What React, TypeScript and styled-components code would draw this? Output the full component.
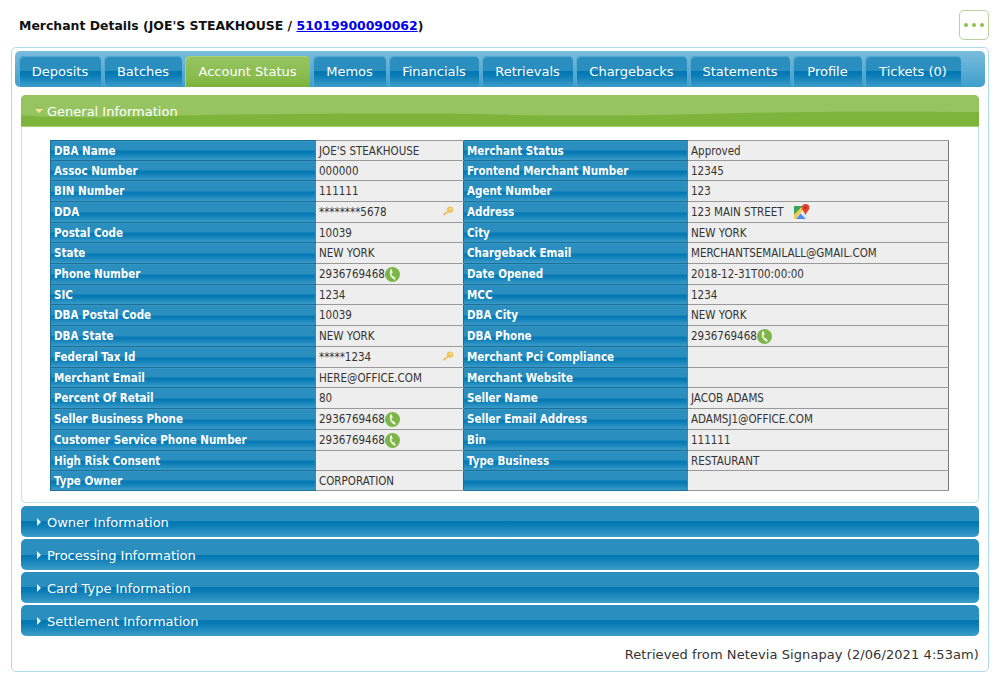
import type { ReactNode } from 'react';
import styled, { createGlobalStyle } from 'styled-components';

const BLUE_GLOSS = 'linear-gradient(to bottom, #2a8ebf 0%, #2a8ebf 50%, #0277b3 50%, #0a7cb6 62%, #3c9dc9 100%)';

const GlobalStyle = createGlobalStyle`
  html, body {
    margin: 0;
    background: #fff;
  }
  body {
    font-family: "DejaVu Sans", Verdana, sans-serif;
    color: #333;
  }
`;

interface TField {
  label?: string;
  value?: string;
  icon?: 'key' | 'phone' | 'map';
}

const COLUMN_WIDTHS = [265, 148, 224, 261];
const ROW_HEIGHTS = [20, 20, 21, 21, 20, 21, 21, 20, 21, 21, 21, 20, 21, 21, 21, 20, 20];

const ROWS: [TField, TField][] = [
  [{ label: 'DBA Name', value: "JOE'S STEAKHOUSE" }, { label: 'Merchant Status', value: 'Approved' }],
  [{ label: 'Assoc Number', value: '000000' }, { label: 'Frontend Merchant Number', value: '12345' }],
  [{ label: 'BIN Number', value: '111111' }, { label: 'Agent Number', value: '123' }],
  [{ label: 'DDA', value: '********5678', icon: 'key' }, { label: 'Address', value: '123 MAIN STREET', icon: 'map' }],
  [{ label: 'Postal Code', value: '10039' }, { label: 'City', value: 'NEW YORK' }],
  [{ label: 'State', value: 'NEW YORK' }, { label: 'Chargeback Email', value: 'MERCHANTSEMAILALL@GMAIL.COM' }],
  [{ label: 'Phone Number', value: '2936769468', icon: 'phone' }, { label: 'Date Opened', value: '2018-12-31T00:00:00' }],
  [{ label: 'SIC', value: '1234' }, { label: 'MCC', value: '1234' }],
  [{ label: 'DBA Postal Code', value: '10039' }, { label: 'DBA City', value: 'NEW YORK' }],
  [{ label: 'DBA State', value: 'NEW YORK' }, { label: 'DBA Phone', value: '2936769468', icon: 'phone' }],
  [{ label: 'Federal Tax Id', value: '*****1234', icon: 'key' }, { label: 'Merchant Pci Compliance' }],
  [{ label: 'Merchant Email', value: 'HERE@OFFICE.COM' }, { label: 'Merchant Website' }],
  [{ label: 'Percent Of Retail', value: '80' }, { label: 'Seller Name', value: 'JACOB ADAMS' }],
  [{ label: 'Seller Business Phone', value: '2936769468', icon: 'phone' }, { label: 'Seller Email Address', value: 'ADAMSJ1@OFFICE.COM' }],
  [{ label: 'Customer Service Phone Number', value: '2936769468', icon: 'phone' }, { label: 'Bin', value: '111111' }],
  [{ label: 'High Risk Consent' }, { label: 'Type Business', value: 'RESTAURANT' }],
  [{ label: 'Type Owner', value: 'CORPORATION' }, {}],
];

const TABS = [
  { name: 'Deposits', width: 82 },
  { name: 'Batches', width: 78 },
  { name: 'Account Status', width: 125, active: true },
  { name: 'Memos', width: 73 },
  { name: 'Financials', width: 90 },
  { name: 'Retrievals', width: 91 },
  { name: 'Chargebacks', width: 111 },
  { name: 'Statements', width: 100 },
  { name: 'Profile', width: 69 },
  { name: 'Tickets (0)', width: 96 },
];

const SECTIONS = ['Owner Information', 'Processing Information', 'Card Type Information', 'Settlement Information'];

const KeyIcon = () => (
  <svg width="12" height="11" viewBox="0 0 12 11">
    <path d="M6.6 4.6 1.6 7.6c-.7.5-.5 1.8.5 1.9l1-.5.4-.9 1-.2.3-.8 2.600-1.200z" fill="#f0bc4e" />
    <circle cx="8.1" cy="3.6" r="3.2" fill="#f3c25a" />
    <circle cx="8.6" cy="2.9" r="1.1" fill="#fbe7a6" />
  </svg>
);

const PhoneIcon = () => (
  <svg width="15" height="15" viewBox="0 0 15 15">
    <circle cx="7.5" cy="7.5" r="7.5" fill="#7cb646" />
    <path d="M6.3 3.2C4.6 6 6 10.2 9.8 11.8" fill="none" stroke="#f6f9ee" strokeWidth="1.6" strokeLinecap="round" />
    <path d="M6 3.2 7 5.4M9.4 11.6 8.6 9.8" fill="none" stroke="#f6f9ee" strokeWidth="1.4" strokeLinecap="round" />
  </svg>
);

const MapIcon = () => (
  <svg width="17" height="16" viewBox="0 0 17 16">
    <path d="M1 2h9L1 11z" fill="#3aa655" />
    <path d="M1 11 10 2h1l.5 2L2.4 15H1z" fill="#f7c948" />
    <path d="M3 15 7.5 9.6 13 15z" fill="#4a8cf0" />
    <path d="M8.2 8.8 11.5 4l1.5 9z" fill="#e8e6da" />
    <path d="M12.6 0a3.8 3.8 0 0 1 3.8 3.8c0 2.6-2.8 4-3.8 7.4-1-3.4-3.8-4.8-3.8-7.4A3.8 3.8 0 0 1 12.6 0z" fill="#e4432f" />
    <circle cx="12.6" cy="3.8" r="1.2" fill="#a92a1c" />
  </svg>
);

const GreenWave = () => (
  <S.Wave viewBox="0 0 958 31" preserveAspectRatio="none" aria-hidden="true">
    <path d="M0 0H958V17C860 16.500 780 16.500 700 18.500S560 21.500 480 19.500 200 18.500 80 22.500C50 22.500 20 21.500 0 20.500z" fill="#96c461" />
  </S.Wave>
);

const FieldIcon = ({ icon }: { icon: NonNullable<TField['icon']> }): ReactNode => {
  if (icon === 'key') return <S.KeySlot><KeyIcon /></S.KeySlot>;
  if (icon === 'map') return <S.MapSlot><MapIcon /></S.MapSlot>;
  return <S.PhoneSlot><PhoneIcon /></S.PhoneSlot>;
};

const FieldCells = ({ field }: { field: TField }) => (
  <>
    <S.LabelCell>{field.label}</S.LabelCell>
    <S.ValueCell>
      <S.ValueInner>
        {field.value}
        {field.icon && <FieldIcon icon={field.icon} />}
      </S.ValueInner>
    </S.ValueCell>
  </>
);

const App = () => (
  <>
    <GlobalStyle />
    <S.Page>
      <S.TitleRow>
        <S.Title>
          Merchant Details (JOE'S STEAKHOUSE / <S.TitleLink href="#">51019900090062</S.TitleLink>)
        </S.Title>
        <S.MoreButton aria-label="More">
          <span />
          <span />
          <span />
        </S.MoreButton>
      </S.TitleRow>

      <S.Panel>
        <S.TabBar>
          {TABS.map((tab) => (
            <S.Tab key={tab.name} $active={tab.active} $width={tab.width}>
              {tab.name}
            </S.Tab>
          ))}
        </S.TabBar>

        <S.Content>
          <S.GreenHeader>
            <GreenWave />
            <S.OpenCaret />
            <S.HeaderText>General Information</S.HeaderText>
          </S.GreenHeader>
          <S.SectionBody>
            <S.Table>
              <colgroup>
                {COLUMN_WIDTHS.map((width) => (
                  <S.Column key={width} $width={width} />
                ))}
              </colgroup>
              <tbody>
                {ROWS.map(([left, right], index) => (
                  <S.Row key={index} $height={ROW_HEIGHTS[index]}>
                    <FieldCells field={left} />
                    <FieldCells field={right} />
                  </S.Row>
                ))}
              </tbody>
            </S.Table>
          </S.SectionBody>

          <S.SectionList>
            {SECTIONS.map((section) => (
              <S.BlueHeader key={section}>
                <S.ClosedCaret />
                <S.HeaderText>{section}</S.HeaderText>
              </S.BlueHeader>
            ))}
          </S.SectionList>

          <S.Footer>Retrieved from Netevia Signapay (2/06/2021 4:53am)</S.Footer>
        </S.Content>
      </S.Panel>
    </S.Page>
  </>
);

export default App;

const S = {
  Page: styled.div`
    width: 1000px;
    height: 681px;
    box-sizing: border-box;
    padding: 9px 11px 0;
    overflow: hidden;
  `,

  TitleRow: styled.div`
    display: flex;
    align-items: center;
    justify-content: space-between;
    height: 31px;
    padding: 0 0 0 8px;
    margin-bottom: 7px;
  `,

  Title: styled.h1`
    margin: 2px 0 0;
    font-size: 12.44px;
    font-weight: bold;
    color: #111;
  `,

  TitleLink: styled.a`
    color: #0000ee;
    text-decoration: underline;
  `,

  MoreButton: styled.button`
    display: flex;
    align-items: center;
    justify-content: center;
    gap: 4px;
    width: 30px;
    height: 30px;
    padding: 0;
    background: #fff;
    border: 1px solid #b9d49a;
    border-radius: 5px;

    span {
      width: 4px;
      height: 4px;
      border-radius: 50%;
      background: #8cc152;
    }
  `,

  Panel: styled.div`
    box-sizing: border-box;
    width: 978px;
    height: 625px;
    padding: 3px;
    background: #fff;
    border: 1px solid #b0dcf0;
    border-radius: 5px;
  `,

  TabBar: styled.div`
    display: flex;
    align-items: flex-end;
    gap: 3px;
    height: 36px;
    padding: 0 4px;
    box-sizing: border-box;
    background: linear-gradient(to bottom, #7abcdc 0%, #3f9fcb 100%);
    border-radius: 5px;
  `,

  Tab: styled.div<{ $active?: boolean; $width: number }>`
    box-sizing: border-box;
    width: ${({ $width }) => $width}px;
    height: 31px;
    padding-top: 1px;
    line-height: 30px;
    text-align: center;
    font-size: 13px;
    color: #fff;
    border-radius: 5px 5px 0 0;
    background: ${({ $active }) =>
      $active ? 'linear-gradient(to bottom, #96c461 0%, #8abd50 60%, #7cb43c 100%)' : BLUE_GLOSS};
    box-shadow: inset 1px 1px 0 ${({ $active }) => ($active ? '#a9d27c' : '#57a9d1')};
  `,

  Content: styled.div`
    padding: 8px 6px 0;
  `,

  GreenHeader: styled.div`
    position: relative;
    display: flex;
    align-items: center;
    box-sizing: border-box;
    height: 32px;
    padding: 1px 0 0 14px;
    font-size: 13px;
    color: #fff;
    overflow: hidden;
    border-radius: 5px 5px 0 0;
    border-bottom: 1px solid #a6d16f;
    background: #7db53c;
  `,

  Wave: styled.svg`
    position: absolute;
    left: 0;
    top: 0;
    width: 100%;
    height: 31px;
  `,

  HeaderText: styled.span`
    position: relative;
  `,

  OpenCaret: styled.span`
    position: relative;
    width: 0;
    height: 0;
    margin-right: 4px;
    border-left: 4px solid transparent;
    border-right: 4px solid transparent;
    border-top: 4px solid #f6e49a;
  `,

  ClosedCaret: styled.span`
    width: 0;
    height: 0;
    margin: 0 6px 0 2px;
    border-top: 4px solid transparent;
    border-bottom: 4px solid transparent;
    border-left: 4px solid #e8f3f9;
  `,

  SectionBody: styled.div`
    box-sizing: border-box;
    height: 376px;
    padding: 13px 29px 0 28px;
    background: #fff;
    border: 1px solid #c3e2f1;
    border-top: 0;
    border-radius: 0 0 5px 5px;
  `,

  Table: styled.table`
    width: 898px;
    border-collapse: collapse;
    table-layout: fixed;
    border-right: 1px solid #777;
    border-bottom: 1px solid #aaa;
    border-top: 1px solid #aaa;
  `,

  Column: styled.col<{ $width: number }>`
    width: ${({ $width }) => $width}px;
  `,

  Row: styled.tr<{ $height: number }>`
    height: ${({ $height }) => $height}px;
  `,

  LabelCell: styled.td`
    padding: 0 3px;
    font-family: "DejaVu Sans Condensed", "DejaVu Sans", sans-serif;
    font-stretch: condensed;
    font-size: 11.5px;
    font-weight: bold;
    color: #fff;
    white-space: nowrap;
    background: ${BLUE_GLOSS};
    border: 1px solid #1e6f97;
    border-right: 0;
  `,

  ValueCell: styled.td`
    padding: 0 3px;
    font-family: "DejaVu Sans Condensed", "DejaVu Sans", sans-serif;
    font-stretch: condensed;
    font-size: 11.5px;
    color: #333;
    white-space: nowrap;
    background: #eeeeee;
    border-top: 1px solid #999;
    border-bottom: 1px solid #999;
    border-left: 1px solid #777;
  `,

  ValueInner: styled.div`
    position: relative;
    display: flex;
    align-items: center;
  `,

  KeySlot: styled.span`
    position: absolute;
    right: 6px;
    top: 1px;
    display: flex;
  `,

  PhoneSlot: styled.span`
    display: flex;
    margin-left: 0;
  `,

  MapSlot: styled.span`
    display: flex;
    margin-left: 9px;
  `,

  SectionList: styled.div`
    display: flex;
    flex-direction: column;
    gap: 2px;
    margin-top: 3px;
  `,

  BlueHeader: styled.div`
    display: flex;
    align-items: center;
    box-sizing: border-box;
    height: 31px;
    padding: 1px 0 0 14px;
    font-size: 13px;
    color: #fff;
    border-radius: 5px;
    background: ${BLUE_GLOSS};
  `,

  Footer: styled.div`
    margin-top: 11px;
    text-align: right;
    font-size: 13px;
    letter-spacing: 0.08px;
    color: #333;
  `,
};
